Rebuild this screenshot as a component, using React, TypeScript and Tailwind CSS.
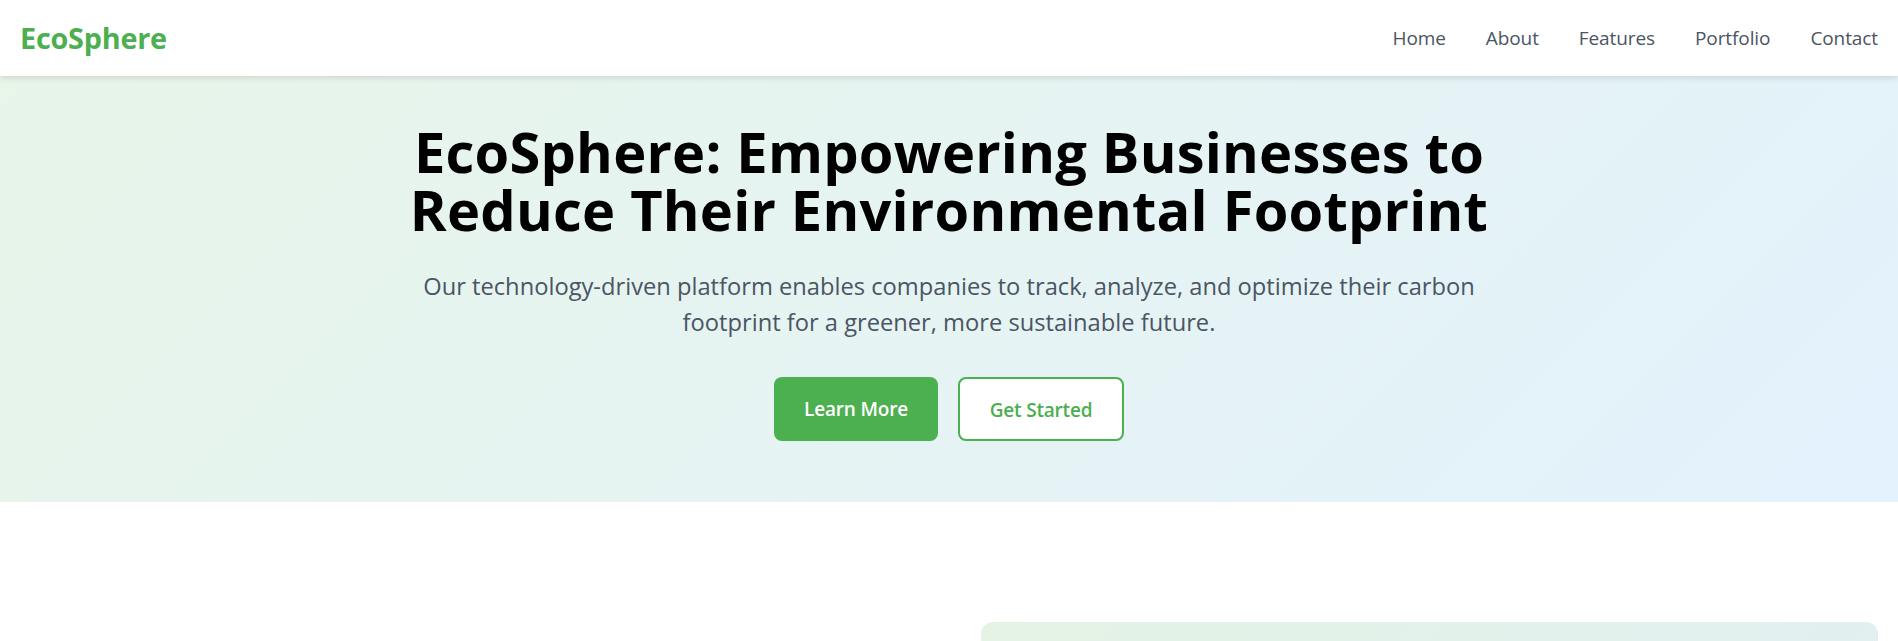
const links = ["Home", "About", "Features", "Portfolio", "Contact"];

function Navbar() {
  return (
    <nav className="relative z-10 flex h-[76px] items-center justify-between bg-white px-[20px] shadow-[0_2px_6px_rgba(0,0,0,0.12)]">
      <a className="text-[28.8px] font-bold tracking-[-0.008em] text-[#4caf50]">EcoSphere</a>
      <ul className="flex items-center gap-[40px]">
        {links.map((l) => (
          <li key={l}>
            <a className="text-[19px] tracking-[-0.005em] text-[#4b5563]">{l}</a>
          </li>
        ))}
      </ul>
    </nav>
  );
}

function Hero() {
  return (
    <section className="bg-[linear-gradient(135deg,#e8f5e9,#e3f2fd)] pt-[46px] pb-[61px]">
      <div className="mx-auto flex max-w-[1100px] flex-col items-center text-center">
        <h1 className="text-[56px] leading-[58px] font-bold tracking-[0.004em] text-black">
          EcoSphere: Empowering Businesses to Reduce Their Environmental Footprint
        </h1>
        <p className="mt-[30px] text-[23.7px] leading-[36px] text-[#4b5563]">
          Our technology-driven platform enables companies to track, analyze, and optimize their carbon
          footprint for a greener, more sustainable future.
        </p>
        <div className="mt-[37px] flex gap-[20px]">
          <button className="h-[64px] w-[164px] rounded-[8px] bg-[#4caf50] text-[19px] font-semibold tracking-[-0.01em] text-white">
            Learn More
          </button>
          <button className="h-[64px] w-[166px] rounded-[8px] border-2 border-[#4caf50] bg-white pt-[3px] text-[19px] font-semibold tracking-[-0.01em] text-[#4caf50]">
            Get Started
          </button>
        </div>
      </div>
    </section>
  );
}

function About() {
  return (
    <section className="bg-white px-[20px] pt-[120px]">
      <div className="grid grid-cols-2 gap-[64px]">
        <div />
        <div className="h-[420px] rounded-[12px] bg-[linear-gradient(135deg,#e4f3e4,#e0eff5)]" />
      </div>
    </section>
  );
}

export default function App() {
  return (
    <div className="min-h-screen bg-white font-['Open_Sans',sans-serif]">
      <Navbar />
      <Hero />
      <About />
    </div>
  );
}
